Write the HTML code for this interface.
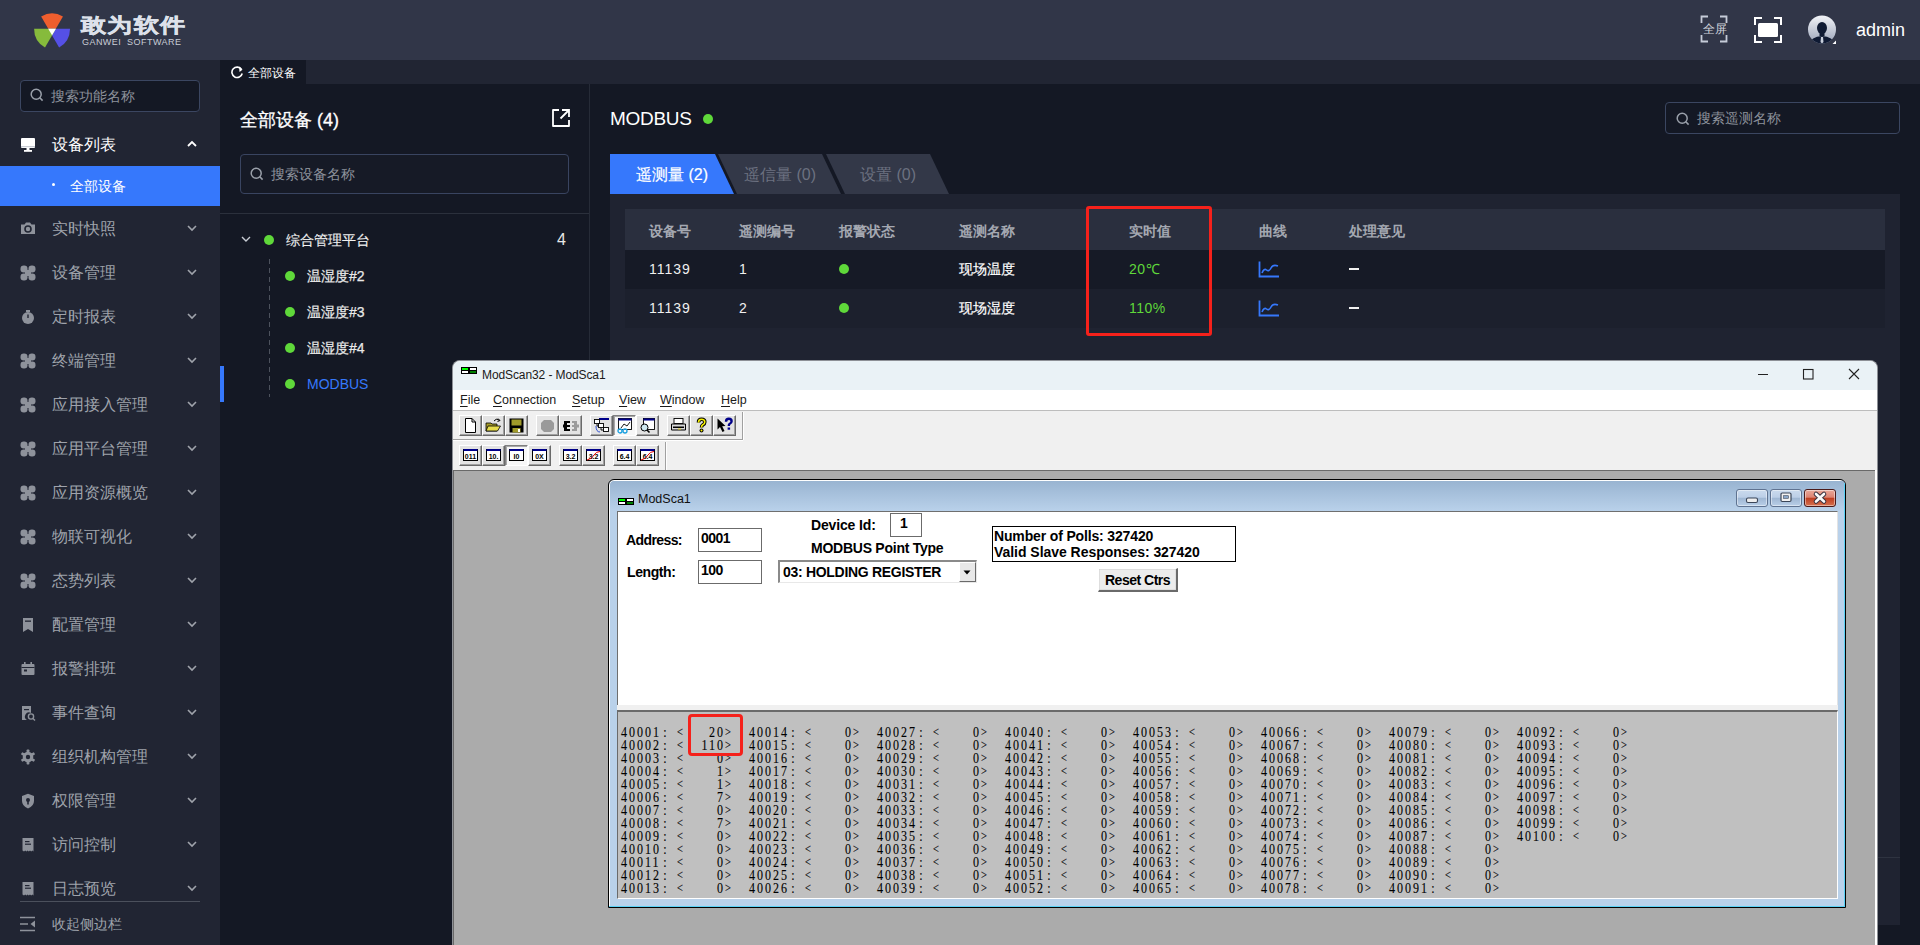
<!DOCTYPE html><html><head><meta charset="utf-8"><style>
html,body{margin:0;padding:0;width:1920px;height:945px;overflow:hidden;background:#141824;font-family:"Liberation Sans",sans-serif;}
.a{position:absolute;box-sizing:border-box;}
.t{position:absolute;white-space:pre;}
</style></head><body>
<div class="a" style="left:0px;top:0px;width:1920px;height:60px;background:#313648"></div>
<svg class="a" style="left:0;top:0" width="100" height="60" viewBox="0 0 100 60"><path d="M52.05,35.3 L41.15,16.42 A21.8,21.8 0 0 1 62.95,16.42 Z" fill="#ef5e2e"/><path d="M48.2,28.7 L70.00,28.70 A21.8,21.8 0 0 1 59.10,47.58 Z" fill="#5550e6"/><path d="M55.9,28.7 L45.00,47.58 A21.8,21.8 0 0 1 34.10,28.70 Z" fill="#86bb3c"/><path d="M48.2,28.7 L55.9,28.7 L52.05,35.3 Z" fill="#fff"/></svg>
<div class="t" style="left:81px;top:14px;font-size:25px;line-height:26px;color:#dde1ea;font-weight:bold;letter-spacing:1.4px;transform:scaleY(0.8);transform-origin:0 0;-webkit-text-stroke:0.6px #dde1ea">敢为软件</div>
<div class="t" style="left:82px;top:36px;font-size:9px;line-height:12px;color:#c9cdd6;font-weight:normal;letter-spacing:0.45px">GANWEI  SOFTWARE</div>
<svg class="a" style="left:1700px;top:15px;" width="28" height="28" viewBox="0 0 28 28"><path d="M1.5,8 V1.5 H8 M20,1.5 H26.5 V8 M26.5,20 V26.5 H20 M8,26.5 H1.5 V20" stroke="#c5cbd8" stroke-width="1.8" fill="none"/></svg>
<div class="t" style="left:1703px;top:19px;font-size:11.5px;line-height:20px;color:#d0d4dc;font-weight:normal;">全屏</div>
<svg class="a" style="left:1753px;top:16px;" width="30" height="28" viewBox="0 0 30 28"><path d="M2,9 V2 H9 M21,2 H28 V9 M28,19 V26 H21 M9,26 H2 V19" stroke="#fff" stroke-width="2" fill="none"/><rect x="5" y="7" width="20" height="14" rx="1.5" fill="#fff"/></svg>
<svg class="a" style="left:1807px;top:15px;" width="30" height="30" viewBox="0 0 30 30"><defs><linearGradient id="av" x1="0" y1="0" x2="0" y2="1"><stop offset="0" stop-color="#f2f4f8"/><stop offset="1" stop-color="#9aa3b8"/></linearGradient><clipPath id="avc"><circle cx="15" cy="14.5" r="14"/></clipPath></defs><circle cx="15" cy="14.5" r="14" fill="url(#av)"/><g clip-path="url(#avc)"><ellipse cx="15" cy="13" rx="5" ry="6" fill="#0f1a33"/><rect x="12.5" y="16" width="5" height="5" fill="#0f1a33"/><path d="M1,32 Q2,22 15,21 Q28,22 29,32 Z" fill="#0f1a33"/><path d="M14,22 L16,22 L16.5,27 L15,28.5 L13.5,27 Z" fill="#c8cfdc"/></g><path d="M25.5,29 L29,25.5 L29,29 Z" fill="#fff"/></svg>
<div class="t" style="left:1856px;top:19px;font-size:18px;line-height:22px;color:#ffffff;font-weight:normal;">admin</div>
<div class="a" style="left:220px;top:60px;width:1700px;height:24px;background:#212533"></div>
<div class="a" style="left:220px;top:60px;width:86px;height:24px;background:#141824"></div>
<svg class="a" style="left:230px;top:65px;" width="14" height="14" viewBox="0 0 14 14"><path d="M11.5,4.5 A5.2,5.2 0 1 0 12.2,8.5" stroke="#fff" stroke-width="1.6" fill="none"/><path d="M9,1.5 L12.5,4.8 L9.5,7 Z" fill="#fff"/></svg>
<div class="t" style="left:248px;top:63px;font-size:12px;line-height:20px;color:#fff;font-weight:normal;">全部设备</div>
<div class="a" style="left:0px;top:60px;width:220px;height:885px;background:#212533"></div>
<div class="a" style="left:20px;top:80px;width:180px;height:32px;background:#141824;border:1px solid #3b4661;border-radius:4px"></div>
<svg class="a" style="left:30px;top:88px;" width="14" height="14" viewBox="0 0 14 14"><circle cx="6.2" cy="6.2" r="5" stroke="#9aa0aa" stroke-width="1.5" fill="none"/><path d="M9.8,9.8 L12.6,12.6" stroke="#9aa0aa" stroke-width="1.6"/></svg>
<div class="t" style="left:51px;top:86px;font-size:14px;line-height:20px;color:#8c919b;font-weight:normal;">搜索功能名称</div>
<svg class="a" style="left:20px;top:137px;" width="16" height="16" viewBox="0 0 16 16"><rect x="1" y="1" width="14" height="10" rx="1" fill="#fff"/><rect x="1" y="9" width="14" height="1.2" fill="#c8ccd4"/><rect x="6.5" y="11" width="3" height="2.5" fill="#fff"/><rect x="4" y="13" width="8" height="1.8" fill="#fff"/></svg>
<div class="t" style="left:52px;top:135px;font-size:16px;line-height:20px;color:#ffffff;font-weight:normal;">设备列表</div>
<svg class="a" style="left:186px;top:140px;" width="12" height="8" viewBox="0 0 12 8"><path d="M2,6 L6,2 L10,6" stroke="#fff" stroke-width="1.8" fill="none"/></svg>
<div class="a" style="left:0px;top:166px;width:220px;height:40px;background:#3678fc"></div>
<div class="a" style="left:52px;top:183px;width:3px;height:3px;background:#fff;border-radius:2px"></div>
<div class="t" style="left:70px;top:176px;font-size:14px;line-height:20px;color:#fff;font-weight:normal;">全部设备</div>
<svg class="a" style="left:20px;top:221px;" width="16" height="14" viewBox="0 0 16 14"><path d="M1,3.5 H4.5 L6,1.5 H10 L11.5,3.5 H15 V13 H1 Z" fill="#8e929b"/><circle cx="8" cy="8" r="3" fill="none" stroke="#212533" stroke-width="1.6"/></svg>
<div class="t" style="left:52px;top:219px;font-size:16px;line-height:20px;color:#9fa3ab;font-weight:normal;">实时快照</div>
<svg class="a" style="left:186px;top:224px;" width="12" height="8" viewBox="0 0 12 8"><path d="M2,2 L6,6 L10,2" stroke="#9fa3ab" stroke-width="1.6" fill="none"/></svg>
<svg class="a" style="left:20px;top:265px;" width="16" height="16" viewBox="0 0 16 16"><g fill="#8e929b"><rect x="0.5" y="0.5" width="7" height="7" rx="3.3"/><rect x="8.5" y="0.5" width="7" height="7" rx="3.3"/><rect x="0.5" y="8.5" width="7" height="7" rx="3.3"/><rect x="8.5" y="8.5" width="7" height="7" rx="3.3"/></g><rect x="5" y="5" width="6" height="6" fill="#8e929b"/></svg>
<div class="t" style="left:52px;top:263px;font-size:16px;line-height:20px;color:#9fa3ab;font-weight:normal;">设备管理</div>
<svg class="a" style="left:186px;top:268px;" width="12" height="8" viewBox="0 0 12 8"><path d="M2,2 L6,6 L10,2" stroke="#9fa3ab" stroke-width="1.6" fill="none"/></svg>
<svg class="a" style="left:20px;top:309px;" width="16" height="16" viewBox="0 0 16 16"><circle cx="8" cy="9" r="6" fill="#8e929b"/><rect x="6" y="1" width="4" height="2" fill="#8e929b"/><path d="M8,9 V5.5" stroke="#212533" stroke-width="1.4"/></svg>
<div class="t" style="left:52px;top:307px;font-size:16px;line-height:20px;color:#9fa3ab;font-weight:normal;">定时报表</div>
<svg class="a" style="left:186px;top:312px;" width="12" height="8" viewBox="0 0 12 8"><path d="M2,2 L6,6 L10,2" stroke="#9fa3ab" stroke-width="1.6" fill="none"/></svg>
<svg class="a" style="left:20px;top:353px;" width="16" height="16" viewBox="0 0 16 16"><g fill="#8e929b"><rect x="0.5" y="0.5" width="7" height="7" rx="3.3"/><rect x="8.5" y="0.5" width="7" height="7" rx="3.3"/><rect x="0.5" y="8.5" width="7" height="7" rx="3.3"/><rect x="8.5" y="8.5" width="7" height="7" rx="3.3"/></g><rect x="5" y="5" width="6" height="6" fill="#8e929b"/></svg>
<div class="t" style="left:52px;top:351px;font-size:16px;line-height:20px;color:#9fa3ab;font-weight:normal;">终端管理</div>
<svg class="a" style="left:186px;top:356px;" width="12" height="8" viewBox="0 0 12 8"><path d="M2,2 L6,6 L10,2" stroke="#9fa3ab" stroke-width="1.6" fill="none"/></svg>
<svg class="a" style="left:20px;top:397px;" width="16" height="16" viewBox="0 0 16 16"><g fill="#8e929b"><rect x="0.5" y="0.5" width="7" height="7" rx="3.3"/><rect x="8.5" y="0.5" width="7" height="7" rx="3.3"/><rect x="0.5" y="8.5" width="7" height="7" rx="3.3"/><rect x="8.5" y="8.5" width="7" height="7" rx="3.3"/></g><rect x="5" y="5" width="6" height="6" fill="#8e929b"/></svg>
<div class="t" style="left:52px;top:395px;font-size:16px;line-height:20px;color:#9fa3ab;font-weight:normal;">应用接入管理</div>
<svg class="a" style="left:186px;top:400px;" width="12" height="8" viewBox="0 0 12 8"><path d="M2,2 L6,6 L10,2" stroke="#9fa3ab" stroke-width="1.6" fill="none"/></svg>
<svg class="a" style="left:20px;top:441px;" width="16" height="16" viewBox="0 0 16 16"><g fill="#8e929b"><rect x="0.5" y="0.5" width="7" height="7" rx="3.3"/><rect x="8.5" y="0.5" width="7" height="7" rx="3.3"/><rect x="0.5" y="8.5" width="7" height="7" rx="3.3"/><rect x="8.5" y="8.5" width="7" height="7" rx="3.3"/></g><rect x="5" y="5" width="6" height="6" fill="#8e929b"/></svg>
<div class="t" style="left:52px;top:439px;font-size:16px;line-height:20px;color:#9fa3ab;font-weight:normal;">应用平台管理</div>
<svg class="a" style="left:186px;top:444px;" width="12" height="8" viewBox="0 0 12 8"><path d="M2,2 L6,6 L10,2" stroke="#9fa3ab" stroke-width="1.6" fill="none"/></svg>
<svg class="a" style="left:20px;top:485px;" width="16" height="16" viewBox="0 0 16 16"><g fill="#8e929b"><rect x="0.5" y="0.5" width="7" height="7" rx="3.3"/><rect x="8.5" y="0.5" width="7" height="7" rx="3.3"/><rect x="0.5" y="8.5" width="7" height="7" rx="3.3"/><rect x="8.5" y="8.5" width="7" height="7" rx="3.3"/></g><rect x="5" y="5" width="6" height="6" fill="#8e929b"/></svg>
<div class="t" style="left:52px;top:483px;font-size:16px;line-height:20px;color:#9fa3ab;font-weight:normal;">应用资源概览</div>
<svg class="a" style="left:186px;top:488px;" width="12" height="8" viewBox="0 0 12 8"><path d="M2,2 L6,6 L10,2" stroke="#9fa3ab" stroke-width="1.6" fill="none"/></svg>
<svg class="a" style="left:20px;top:529px;" width="16" height="16" viewBox="0 0 16 16"><g fill="#8e929b"><rect x="0.5" y="0.5" width="7" height="7" rx="3.3"/><rect x="8.5" y="0.5" width="7" height="7" rx="3.3"/><rect x="0.5" y="8.5" width="7" height="7" rx="3.3"/><rect x="8.5" y="8.5" width="7" height="7" rx="3.3"/></g><rect x="5" y="5" width="6" height="6" fill="#8e929b"/></svg>
<div class="t" style="left:52px;top:527px;font-size:16px;line-height:20px;color:#9fa3ab;font-weight:normal;">物联可视化</div>
<svg class="a" style="left:186px;top:532px;" width="12" height="8" viewBox="0 0 12 8"><path d="M2,2 L6,6 L10,2" stroke="#9fa3ab" stroke-width="1.6" fill="none"/></svg>
<svg class="a" style="left:20px;top:573px;" width="16" height="16" viewBox="0 0 16 16"><g fill="#8e929b"><rect x="0.5" y="0.5" width="7" height="7" rx="3.3"/><rect x="8.5" y="0.5" width="7" height="7" rx="3.3"/><rect x="0.5" y="8.5" width="7" height="7" rx="3.3"/><rect x="8.5" y="8.5" width="7" height="7" rx="3.3"/></g><rect x="5" y="5" width="6" height="6" fill="#8e929b"/></svg>
<div class="t" style="left:52px;top:571px;font-size:16px;line-height:20px;color:#9fa3ab;font-weight:normal;">态势列表</div>
<svg class="a" style="left:186px;top:576px;" width="12" height="8" viewBox="0 0 12 8"><path d="M2,2 L6,6 L10,2" stroke="#9fa3ab" stroke-width="1.6" fill="none"/></svg>
<svg class="a" style="left:20px;top:617px;" width="16" height="16" viewBox="0 0 16 16"><path d="M3,1 H13 V15 L8,12 L3,15 Z" fill="#8e929b"/><rect x="5" y="3.5" width="6" height="1.3" fill="#212533"/></svg>
<div class="t" style="left:52px;top:615px;font-size:16px;line-height:20px;color:#9fa3ab;font-weight:normal;">配置管理</div>
<svg class="a" style="left:186px;top:620px;" width="12" height="8" viewBox="0 0 12 8"><path d="M2,2 L6,6 L10,2" stroke="#9fa3ab" stroke-width="1.6" fill="none"/></svg>
<svg class="a" style="left:20px;top:661px;" width="16" height="16" viewBox="0 0 16 16"><rect x="1.5" y="3" width="13" height="11" rx="1" fill="#8e929b"/><rect x="4" y="1" width="1.6" height="3.5" fill="#8e929b"/><rect x="10.4" y="1" width="1.6" height="3.5" fill="#8e929b"/><rect x="1.5" y="6" width="13" height="1" fill="#212533"/><rect x="4" y="8.5" width="3" height="2" fill="#212533"/></svg>
<div class="t" style="left:52px;top:659px;font-size:16px;line-height:20px;color:#9fa3ab;font-weight:normal;">报警排班</div>
<svg class="a" style="left:186px;top:664px;" width="12" height="8" viewBox="0 0 12 8"><path d="M2,2 L6,6 L10,2" stroke="#9fa3ab" stroke-width="1.6" fill="none"/></svg>
<svg class="a" style="left:20px;top:705px;" width="16" height="16" viewBox="0 0 16 16"><path d="M2,1 H11 V8 A4,4 0 0 0 7,15 H2 Z" fill="#8e929b"/><circle cx="11" cy="11.5" r="2.6" fill="none" stroke="#8e929b" stroke-width="1.4"/><path d="M13,13.5 L15,15.5" stroke="#8e929b" stroke-width="1.4"/><rect x="4" y="4" width="5" height="1.2" fill="#212533"/></svg>
<div class="t" style="left:52px;top:703px;font-size:16px;line-height:20px;color:#9fa3ab;font-weight:normal;">事件查询</div>
<svg class="a" style="left:186px;top:708px;" width="12" height="8" viewBox="0 0 12 8"><path d="M2,2 L6,6 L10,2" stroke="#9fa3ab" stroke-width="1.6" fill="none"/></svg>
<svg class="a" style="left:20px;top:749px;" width="16" height="16" viewBox="0 0 16 16"><rect x="6.6" y="0.5" width="2.8" height="15" rx="0.8" fill="#8e929b" transform="rotate(0 8 8)"/><rect x="6.6" y="0.5" width="2.8" height="15" rx="0.8" fill="#8e929b" transform="rotate(60 8 8)"/><rect x="6.6" y="0.5" width="2.8" height="15" rx="0.8" fill="#8e929b" transform="rotate(120 8 8)"/><circle cx="8" cy="8" r="5.3" fill="#8e929b"/><circle cx="8" cy="8" r="2.2" fill="#212533"/></svg>
<div class="t" style="left:52px;top:747px;font-size:16px;line-height:20px;color:#9fa3ab;font-weight:normal;">组织机构管理</div>
<svg class="a" style="left:186px;top:752px;" width="12" height="8" viewBox="0 0 12 8"><path d="M2,2 L6,6 L10,2" stroke="#9fa3ab" stroke-width="1.6" fill="none"/></svg>
<svg class="a" style="left:20px;top:793px;" width="16" height="16" viewBox="0 0 16 16"><path d="M8,0.8 L14,3 V8 Q14,13 8,15.5 Q2,13 2,8 V3 Z" fill="#8e929b"/><circle cx="8" cy="7" r="2" fill="#212533"/><rect x="7.2" y="8" width="1.6" height="3.5" fill="#212533"/></svg>
<div class="t" style="left:52px;top:791px;font-size:16px;line-height:20px;color:#9fa3ab;font-weight:normal;">权限管理</div>
<svg class="a" style="left:186px;top:796px;" width="12" height="8" viewBox="0 0 12 8"><path d="M2,2 L6,6 L10,2" stroke="#9fa3ab" stroke-width="1.6" fill="none"/></svg>
<svg class="a" style="left:20px;top:837px;" width="16" height="16" viewBox="0 0 16 16"><path d="M2.5,1 H13.5 V14.5 L12.4,13.6 L11.2,14.5 L10,13.6 L8.8,14.5 L7.6,13.6 L6.4,14.5 L5.2,13.6 L4,14.5 L2.5,13.6 Z" fill="#8e929b"/><rect x="5" y="4" width="4.5" height="1.2" fill="#212533"/><rect x="5" y="6.6" width="6" height="1.2" fill="#212533"/></svg>
<div class="t" style="left:52px;top:835px;font-size:16px;line-height:20px;color:#9fa3ab;font-weight:normal;">访问控制</div>
<svg class="a" style="left:186px;top:840px;" width="12" height="8" viewBox="0 0 12 8"><path d="M2,2 L6,6 L10,2" stroke="#9fa3ab" stroke-width="1.6" fill="none"/></svg>
<svg class="a" style="left:20px;top:881px;" width="16" height="16" viewBox="0 0 16 16"><path d="M2.5,1 H13.5 V14.5 L12.4,13.6 L11.2,14.5 L10,13.6 L8.8,14.5 L7.6,13.6 L6.4,14.5 L5.2,13.6 L4,14.5 L2.5,13.6 Z" fill="#8e929b"/><rect x="5" y="4" width="4.5" height="1.2" fill="#212533"/><rect x="5" y="6.6" width="6" height="1.2" fill="#212533"/></svg>
<div class="t" style="left:52px;top:879px;font-size:16px;line-height:20px;color:#9fa3ab;font-weight:normal;">日志预览</div>
<svg class="a" style="left:186px;top:884px;" width="12" height="8" viewBox="0 0 12 8"><path d="M2,2 L6,6 L10,2" stroke="#9fa3ab" stroke-width="1.6" fill="none"/></svg>
<div class="a" style="left:20px;top:901px;width:180px;height:1px;background:#4b505c"></div>
<svg class="a" style="left:19px;top:916px;" width="18" height="16" viewBox="0 0 18 16"><path d="M1,1.5 H16 M1,8 H9 M1,14.5 H16" stroke="#8e929b" stroke-width="1.6"/><path d="M16,4.5 V11.5 L11.5,8 Z" fill="#8e929b"/></svg>
<div class="t" style="left:52px;top:914px;font-size:14px;line-height:20px;color:#9fa3ab;font-weight:normal;">收起侧边栏</div>
<div class="a" style="left:220px;top:84px;width:369px;height:861px;background:#141824"></div>
<div class="a" style="left:589px;top:84px;width:1px;height:861px;background:#262b37"></div>
<div class="t" style="left:240px;top:110px;font-size:18px;line-height:20px;color:#fff;font-weight:normal;-webkit-text-stroke:0.3px #fff">全部设备 (4)</div>
<svg class="a" style="left:551px;top:108px;" width="20" height="20" viewBox="0 0 20 20"><path d="M8,2 H2 V18 H18 V12" stroke="#fff" stroke-width="1.8" fill="none" stroke-linejoin="round"/><path d="M11,2 H18 V9 M18,2 L9.5,10.5" stroke="#fff" stroke-width="1.8" fill="none"/></svg>
<div class="a" style="left:240px;top:154px;width:329px;height:40px;background:#161a26;border:1px solid #394460;border-radius:4px"></div>
<svg class="a" style="left:250px;top:167px;" width="14" height="14" viewBox="0 0 14 14"><circle cx="6.2" cy="6.2" r="5" stroke="#9aa0aa" stroke-width="1.5" fill="none"/><path d="M9.8,9.8 L12.6,12.6" stroke="#9aa0aa" stroke-width="1.6"/></svg>
<div class="t" style="left:271px;top:164px;font-size:14px;line-height:20px;color:#8c919b;font-weight:normal;">搜索设备名称</div>
<div class="a" style="left:220px;top:213px;width:369px;height:1px;background:#2b303c"></div>
<svg class="a" style="left:240px;top:235px;" width="12" height="8" viewBox="0 0 12 8"><path d="M2,2 L6,6 L10,2" stroke="#c8ccd4" stroke-width="1.4" fill="none"/></svg>
<div class="a" style="left:264px;top:235px;width:10px;height:10px;background:#5fd83a;border-radius:50%"></div>
<div class="t" style="left:286px;top:230px;font-size:14px;line-height:20px;color:#f0f0f0;font-weight:normal;-webkit-text-stroke:0.15px #f0f0f0">综合管理平台</div>
<div class="t" style="left:557px;top:230px;font-size:16px;line-height:20px;color:#e8e8e8;font-weight:normal;">4</div>
<svg class="a" style="left:268px;top:259px;" width="3" height="138" viewBox="0 0 3 138"><line x1="1.5" y1="0" x2="1.5" y2="138" stroke="#4d525d" stroke-width="1" stroke-dasharray="5,4"/></svg>
<div class="a" style="left:285px;top:271px;width:10px;height:10px;background:#5fd83a;border-radius:50%"></div>
<div class="t" style="left:307px;top:266px;font-size:14px;line-height:20px;color:#e8e8e8;font-weight:normal;-webkit-text-stroke:0.25px #e8e8e8">温湿度#2</div>
<div class="a" style="left:285px;top:307px;width:10px;height:10px;background:#5fd83a;border-radius:50%"></div>
<div class="t" style="left:307px;top:302px;font-size:14px;line-height:20px;color:#e8e8e8;font-weight:normal;-webkit-text-stroke:0.25px #e8e8e8">温湿度#3</div>
<div class="a" style="left:285px;top:343px;width:10px;height:10px;background:#5fd83a;border-radius:50%"></div>
<div class="t" style="left:307px;top:338px;font-size:14px;line-height:20px;color:#e8e8e8;font-weight:normal;-webkit-text-stroke:0.25px #e8e8e8">温湿度#4</div>
<div class="a" style="left:285px;top:379px;width:10px;height:10px;background:#5fd83a;border-radius:50%"></div>
<div class="t" style="left:307px;top:374px;font-size:14px;line-height:20px;color:#3678fc;font-weight:normal;">MODBUS</div>
<div class="a" style="left:220px;top:366px;width:4px;height:36px;background:#3678fc"></div>
<div class="t" style="left:610px;top:109px;font-size:19px;line-height:20px;color:#fff;font-weight:normal;letter-spacing:-0.3px">MODBUS</div>
<div class="a" style="left:703px;top:114px;width:10px;height:10px;background:#5fd83a;border-radius:50%"></div>
<div class="a" style="left:1665px;top:102px;width:235px;height:32px;background:#141824;border:1px solid #3b4661;border-radius:4px"></div>
<svg class="a" style="left:1676px;top:112px;" width="14" height="14" viewBox="0 0 14 14"><circle cx="6.2" cy="6.2" r="5" stroke="#9aa0aa" stroke-width="1.5" fill="none"/><path d="M9.8,9.8 L12.6,12.6" stroke="#9aa0aa" stroke-width="1.6"/></svg>
<div class="t" style="left:1697px;top:108px;font-size:14px;line-height:20px;color:#8c919b;font-weight:normal;">搜索遥测名称</div>
<svg class="a" style="left:600px;top:150px;" width="360" height="46" viewBox="0 0 360 46"><path d="M10,4 H115 L134,44 H10 Z" fill="#3678fc"/><path d="M118,4 H222 L241,44 H137 Z" fill="#333848"/><path d="M226,4 H330 L349,44 H245 Z" fill="#333848"/></svg>
<div class="t" style="left:636px;top:165px;font-size:16px;line-height:20px;color:#fff;font-weight:normal;-webkit-text-stroke:0.2px #fff">遥测量 (2)</div>
<div class="t" style="left:744px;top:165px;font-size:16px;line-height:20px;color:#6c7180;font-weight:normal;">遥信量 (0)</div>
<div class="t" style="left:860px;top:165px;font-size:16px;line-height:20px;color:#6c7180;font-weight:normal;">设置 (0)</div>
<div class="a" style="left:610px;top:194px;width:1290px;height:731px;background:#1f2331"></div>
<div class="a" style="left:610px;top:857px;width:1290px;height:1px;background:#2e3340"></div>
<div class="a" style="left:625px;top:209px;width:1260px;height:41px;background:#2a2f3e"></div>
<div class="a" style="left:625px;top:250px;width:1260px;height:39px;background:#161a26"></div>
<div class="a" style="left:625px;top:289px;width:1260px;height:39px;background:#1c202d"></div>
<div class="t" style="left:649px;top:221px;font-size:14px;line-height:20px;color:#a4a8b1;font-weight:bold;">设备号</div>
<div class="t" style="left:739px;top:221px;font-size:14px;line-height:20px;color:#a4a8b1;font-weight:bold;">遥测编号</div>
<div class="t" style="left:839px;top:221px;font-size:14px;line-height:20px;color:#a4a8b1;font-weight:bold;">报警状态</div>
<div class="t" style="left:959px;top:221px;font-size:14px;line-height:20px;color:#a4a8b1;font-weight:bold;">遥测名称</div>
<div class="t" style="left:1129px;top:221px;font-size:14px;line-height:20px;color:#a4a8b1;font-weight:bold;">实时值</div>
<div class="t" style="left:1259px;top:221px;font-size:14px;line-height:20px;color:#a4a8b1;font-weight:bold;">曲线</div>
<div class="t" style="left:1349px;top:221px;font-size:14px;line-height:20px;color:#a4a8b1;font-weight:bold;">处理意见</div>
<div class="t" style="left:649px;top:259px;font-size:14px;line-height:20px;color:#f0f0f0;font-weight:normal;letter-spacing:1px">11139</div>
<div class="t" style="left:739px;top:259px;font-size:14px;line-height:20px;color:#f0f0f0;font-weight:normal;letter-spacing:1px">1</div>
<div class="a" style="left:839px;top:264px;width:10px;height:10px;background:#5fd83a;border-radius:50%"></div>
<div class="t" style="left:959px;top:259px;font-size:14px;line-height:20px;color:#ffffff;font-weight:normal;-webkit-text-stroke:0.2px #fff">现场温度</div>
<div class="t" style="left:1129px;top:259px;font-size:14px;line-height:20px;color:#5fd83a;font-weight:normal;letter-spacing:0.5px">20℃</div>
<svg class="a" style="left:1258px;top:261px;" width="22" height="17" viewBox="0 0 22 17"><path d="M1.5,0.5 V15.5 H21" stroke="#3678fc" stroke-width="1.8" fill="none"/><path d="M4,12 Q6,7 8.5,9 Q11,11 13,7 Q15,3 20,5" stroke="#3678fc" stroke-width="1.6" fill="none"/></svg>
<div class="a" style="left:1349px;top:268px;width:10px;height:1.5px;background:#f0f0f0"></div>
<div class="t" style="left:649px;top:298px;font-size:14px;line-height:20px;color:#f0f0f0;font-weight:normal;letter-spacing:1px">11139</div>
<div class="t" style="left:739px;top:298px;font-size:14px;line-height:20px;color:#f0f0f0;font-weight:normal;letter-spacing:1px">2</div>
<div class="a" style="left:839px;top:303px;width:10px;height:10px;background:#5fd83a;border-radius:50%"></div>
<div class="t" style="left:959px;top:298px;font-size:14px;line-height:20px;color:#ffffff;font-weight:normal;-webkit-text-stroke:0.2px #fff">现场湿度</div>
<div class="t" style="left:1129px;top:298px;font-size:14px;line-height:20px;color:#5fd83a;font-weight:normal;letter-spacing:0.5px">110%</div>
<svg class="a" style="left:1258px;top:300px;" width="22" height="17" viewBox="0 0 22 17"><path d="M1.5,0.5 V15.5 H21" stroke="#3678fc" stroke-width="1.8" fill="none"/><path d="M4,12 Q6,7 8.5,9 Q11,11 13,7 Q15,3 20,5" stroke="#3678fc" stroke-width="1.6" fill="none"/></svg>
<div class="a" style="left:1349px;top:307px;width:10px;height:1.5px;background:#f0f0f0"></div>
<div class="a" style="left:1086px;top:206px;width:126px;height:130px;border:3px solid #f5211b;border-radius:3px"></div>
<div class="a" style="left:452px;top:360px;width:1426px;height:585px;border:1px solid #8d9096;border-bottom:none;border-radius:8px 8px 0 0;background:#f0f0f0"></div>
<div class="a" style="left:453px;top:361px;width:1424px;height:29px;background:#eaf2f6;border-radius:7px 7px 0 0"></div>
<svg class="a" style="left:461px;top:367px;shape-rendering:crispEdges" width="16" height="7" viewBox="0 0 16 7"><rect x="0" y="0" width="16" height="7" fill="#000"/><rect x="1" y="1" width="6" height="2" fill="#00ff00"/><rect x="9" y="1" width="6" height="2" fill="#fff"/><rect x="1" y="4" width="6" height="2" fill="#fff"/><rect x="9" y="4" width="6" height="2" fill="#008000"/></svg>
<div class="t" style="left:482px;top:365px;font-size:12px;line-height:20px;color:#1a1a1a;font-weight:normal;letter-spacing:-0.1px">ModScan32 - ModSca1</div>
<svg class="a" style="left:1755px;top:364px;" width="110" height="22" viewBox="0 0 110 22"><path d="M3,10.5 H13" stroke="#222" stroke-width="1"/><rect x="48.5" y="5.5" width="9.5" height="9.5" fill="none" stroke="#222" stroke-width="1.1"/><path d="M94,5 L104,15 M104,5 L94,15" stroke="#222" stroke-width="1.1"/></svg>
<div class="a" style="left:453px;top:390px;width:1424px;height:20px;background:#ffffff"></div>
<div class="a" style="left:453px;top:410px;width:1424px;height:1px;background:#bdbdbd"></div>
<div class="t" style="left:460px;top:390px;font-size:12.5px;line-height:20px;color:#1a1a1a"><span style="text-decoration:underline;text-underline-offset:2px">F</span>ile</div>
<div class="t" style="left:493px;top:390px;font-size:12.5px;line-height:20px;color:#1a1a1a"><span style="text-decoration:underline;text-underline-offset:2px">C</span>onnection</div>
<div class="t" style="left:572px;top:390px;font-size:12.5px;line-height:20px;color:#1a1a1a"><span style="text-decoration:underline;text-underline-offset:2px">S</span>etup</div>
<div class="t" style="left:619px;top:390px;font-size:12.5px;line-height:20px;color:#1a1a1a"><span style="text-decoration:underline;text-underline-offset:2px">V</span>iew</div>
<div class="t" style="left:660px;top:390px;font-size:12.5px;line-height:20px;color:#1a1a1a"><span style="text-decoration:underline;text-underline-offset:2px">W</span>indow</div>
<div class="t" style="left:721px;top:390px;font-size:12.5px;line-height:20px;color:#1a1a1a"><span style="text-decoration:underline;text-underline-offset:2px">H</span>elp</div>
<div class="a" style="left:453px;top:411px;width:1424px;height:59px;background:#f0f0f0"></div>
<div class="a" style="left:453px;top:439px;width:290px;height:1px;background:#a0a0a0"></div>
<div class="a" style="left:453px;top:440px;width:290px;height:1px;background:#fff"></div>
<div class="a" style="left:742px;top:412px;width:1px;height:28px;background:#a0a0a0"></div>
<div class="a" style="left:743px;top:412px;width:1px;height:28px;background:#fff"></div>
<div class="a" style="left:665px;top:442px;width:1px;height:28px;background:#a0a0a0"></div>
<div class="a" style="left:666px;top:442px;width:1px;height:28px;background:#fff"></div>
<div class="a" style="left:459px;top:415px;width:23px;height:21px;background:#e3e3e3;border-top:1px solid #fff;border-left:1px solid #fff;border-right:1px solid #6a6a6a;border-bottom:1px solid #6a6a6a;box-shadow:inset -1px -1px 0 #a0a0a0"></div>
<svg class="a" style="left:462px;top:417px;" width="17" height="17" viewBox="0 0 17 17"><path d="M3.5,1.5 H10 L13.5,5 V15.5 H3.5 Z" fill="#fff" stroke="#000"/><path d="M10,1.5 V5 H13.5" fill="none" stroke="#000"/></svg>
<div class="a" style="left:482px;top:415px;width:23px;height:21px;background:#e3e3e3;border-top:1px solid #fff;border-left:1px solid #fff;border-right:1px solid #6a6a6a;border-bottom:1px solid #6a6a6a;box-shadow:inset -1px -1px 0 #a0a0a0"></div>
<svg class="a" style="left:485px;top:417px;" width="17" height="17" viewBox="0 0 17 17"><path d="M1,6 H6 L7,7 H12 V14 H1 Z" fill="#a49a2a" stroke="#000" stroke-width="0.8"/><path d="M3,9 H15.5 L12.5,14 H1 Z" fill="#e6dc4a" stroke="#000" stroke-width="0.8"/><path d="M9,4 Q11,1 14,3" stroke="#000" fill="none"/><path d="M13,1.5 L15,3.5 L12.5,4.5" stroke="#000" fill="none"/></svg>
<div class="a" style="left:505px;top:415px;width:23px;height:21px;background:#e3e3e3;border-top:1px solid #fff;border-left:1px solid #fff;border-right:1px solid #6a6a6a;border-bottom:1px solid #6a6a6a;box-shadow:inset -1px -1px 0 #a0a0a0"></div>
<svg class="a" style="left:508px;top:417px;" width="17" height="17" viewBox="0 0 17 17"><rect x="1.5" y="1.5" width="14" height="14" fill="#000"/><rect x="3.5" y="2.5" width="10" height="6" fill="#a09a2a"/><rect x="4.5" y="11" width="8" height="4.5" fill="#a09a2a"/><rect x="10" y="12" width="2" height="3" fill="#fff"/></svg>
<div class="a" style="left:536px;top:415px;width:23px;height:21px;background:#e3e3e3;border-top:1px solid #fff;border-left:1px solid #fff;border-right:1px solid #6a6a6a;border-bottom:1px solid #6a6a6a;box-shadow:inset -1px -1px 0 #a0a0a0"></div>
<svg class="a" style="left:539px;top:417px;" width="17" height="17" viewBox="0 0 17 17"><path d="M5,3 H12 L15,6 V12 L12,15 H5 L2,12 V6 Z" fill="#9a9a9a"/></svg>
<div class="a" style="left:559px;top:415px;width:23px;height:21px;background:#e3e3e3;border-top:1px solid #fff;border-left:1px solid #fff;border-right:1px solid #6a6a6a;border-bottom:1px solid #6a6a6a;box-shadow:inset -1px -1px 0 #a0a0a0"></div>
<svg class="a" style="left:562px;top:417px;" width="17" height="17" viewBox="0 0 17 17"><path d="M2,4 H8 V6 H5 V8 H8 V10 H5 V12 H8 V14 H2 Z" fill="#000"/><path d="M1,7.5 H3 V10.5 H1 Z" fill="#000"/><path d="M10,4 H15 V14 H10 V12 H12 V10 H10 V8 H12 V6 H10 Z" fill="#9a9a9a"/><rect x="15" y="7.5" width="2" height="3" fill="#9a9a9a"/></svg>
<div class="a" style="left:590px;top:415px;width:23px;height:21px;background:#e3e3e3;border-top:1px solid #fff;border-left:1px solid #fff;border-right:1px solid #6a6a6a;border-bottom:1px solid #6a6a6a;box-shadow:inset -1px -1px 0 #a0a0a0"></div>
<svg class="a" style="left:593px;top:417px;" width="17" height="17" viewBox="0 0 17 17"><rect x="6" y="1" width="10" height="2" fill="#00008a"/><rect x="1.5" y="2.5" width="5" height="4" fill="#fff" stroke="#000" stroke-width="0.9"/><rect x="5.5" y="6.5" width="5" height="4" fill="#fff" stroke="#000" stroke-width="0.9"/><rect x="10.5" y="10.5" width="5" height="4" fill="#fff" stroke="#000" stroke-width="0.9"/><path d="M4,7 V9 H5.5 M8,11 V13 H10.5" stroke="#000" fill="none" stroke-width="0.9"/><path d="M3,9 Q3,15 7,15" stroke="#3050d0" fill="none" stroke-width="1"/></svg>
<div class="a" style="left:613px;top:415px;width:23px;height:21px;background:#f7f7f7;border-top:1px solid #808080;border-left:1px solid #808080;border-right:1px solid #fff;border-bottom:1px solid #fff;box-shadow:inset 1px 1px 0 #a8a8a8"></div>
<svg class="a" style="left:616px;top:417px;" width="17" height="17" viewBox="0 0 17 17"><rect x="2.5" y="1.5" width="13" height="11" fill="#fff" stroke="#000" stroke-width="0.9"/><rect x="2.5" y="1.5" width="13" height="2" fill="#00008a"/><path d="M5,11 L8,7 L11,9 L14,5" stroke="#000" fill="none" stroke-width="0.9"/><circle cx="4" cy="14" r="2" fill="none" stroke="#1aa0e0" stroke-width="1.3"/><circle cx="9" cy="14" r="2" fill="none" stroke="#1aa0e0" stroke-width="1.3"/></svg>
<div class="a" style="left:636px;top:415px;width:23px;height:21px;background:#e3e3e3;border-top:1px solid #fff;border-left:1px solid #fff;border-right:1px solid #6a6a6a;border-bottom:1px solid #6a6a6a;box-shadow:inset -1px -1px 0 #a0a0a0"></div>
<svg class="a" style="left:639px;top:417px;" width="17" height="17" viewBox="0 0 17 17"><rect x="4.5" y="1.5" width="11" height="11" fill="#fff" stroke="#000" stroke-width="0.9"/><rect x="4.5" y="1.5" width="11" height="2" fill="#00008a"/><circle cx="5.5" cy="10.5" r="3.5" fill="#cfe8f0" stroke="#000" stroke-width="1"/><path d="M8,13 L10.5,15.5" stroke="#000" stroke-width="1.6"/></svg>
<div class="a" style="left:667px;top:415px;width:23px;height:21px;background:#e3e3e3;border-top:1px solid #fff;border-left:1px solid #fff;border-right:1px solid #6a6a6a;border-bottom:1px solid #6a6a6a;box-shadow:inset -1px -1px 0 #a0a0a0"></div>
<svg class="a" style="left:670px;top:417px;" width="17" height="17" viewBox="0 0 17 17"><rect x="4" y="1.5" width="9" height="5" fill="#fff" stroke="#000" stroke-width="0.9"/><path d="M1.5,7 H15.5 V13 H1.5 Z" fill="#d8d8d8" stroke="#000" stroke-width="1"/><rect x="3" y="9.5" width="11" height="1.5" fill="#000"/><rect x="8" y="11.5" width="3" height="1" fill="#e0d020"/></svg>
<div class="a" style="left:690px;top:415px;width:23px;height:21px;background:#e3e3e3;border-top:1px solid #fff;border-left:1px solid #fff;border-right:1px solid #6a6a6a;border-bottom:1px solid #6a6a6a;box-shadow:inset -1px -1px 0 #a0a0a0"></div>
<svg class="a" style="left:693px;top:417px;" width="17" height="17" viewBox="0 0 17 17"><path d="M5.5,5.5 Q5.5,2.2 8.5,2.2 Q11.8,2.2 11.8,5 Q11.8,6.8 9.8,7.8 Q8.5,8.5 8.5,10.5" fill="none" stroke="#000" stroke-width="3.6"/><path d="M5.5,5.5 Q5.5,2.2 8.5,2.2 Q11.8,2.2 11.8,5 Q11.8,6.8 9.8,7.8 Q8.5,8.5 8.5,10.5" fill="none" stroke="#f5f000" stroke-width="1.6"/><circle cx="8.5" cy="13.6" r="2" fill="#000"/><circle cx="8.5" cy="13.6" r="1" fill="#f5f000"/></svg>
<div class="a" style="left:713px;top:415px;width:23px;height:21px;background:#e3e3e3;border-top:1px solid #fff;border-left:1px solid #fff;border-right:1px solid #6a6a6a;border-bottom:1px solid #6a6a6a;box-shadow:inset -1px -1px 0 #a0a0a0"></div>
<svg class="a" style="left:716px;top:417px;" width="17" height="17" viewBox="0 0 17 17"><path d="M1.5,1.5 L1.5,12.5 L4,10 L6.5,15 L8.5,14 L6.2,9.2 L9.5,9 Z" fill="#000"/><path d="M10,4.8 Q10,1.8 12.8,1.8 Q15.6,1.8 15.6,4.2 Q15.6,6 13.5,7 Q12.8,7.5 12.8,9" fill="none" stroke="#00008a" stroke-width="2.4"/><rect x="11.6" y="10.5" width="2.5" height="2.2" fill="#00008a"/></svg>
<div class="a" style="left:459px;top:445px;width:23px;height:21px;background:#e3e3e3;border-top:1px solid #fff;border-left:1px solid #fff;border-right:1px solid #6a6a6a;border-bottom:1px solid #6a6a6a;box-shadow:inset -1px -1px 0 #a0a0a0"></div>
<svg class="a" style="left:462px;top:447px;" width="17" height="17" viewBox="0 0 17 17"><rect x="1.5" y="2.5" width="14" height="11" fill="#fff" stroke="#000" stroke-width="1"/><rect x="1.5" y="2" width="14" height="2" fill="#00008a"/><text x="8.5" y="12" text-anchor="middle" font-family="Liberation Sans" font-size="7" font-weight="bold" fill="#000">011</text></svg>
<div class="a" style="left:482px;top:445px;width:23px;height:21px;background:#e3e3e3;border-top:1px solid #fff;border-left:1px solid #fff;border-right:1px solid #6a6a6a;border-bottom:1px solid #6a6a6a;box-shadow:inset -1px -1px 0 #a0a0a0"></div>
<svg class="a" style="left:485px;top:447px;" width="17" height="17" viewBox="0 0 17 17"><rect x="1.5" y="2.5" width="14" height="11" fill="#fff" stroke="#000" stroke-width="1"/><rect x="1.5" y="2" width="14" height="2" fill="#00008a"/><text x="8.5" y="12" text-anchor="middle" font-family="Liberation Sans" font-size="7" font-weight="bold" fill="#000">10.</text></svg>
<div class="a" style="left:505px;top:445px;width:23px;height:21px;background:#f7f7f7;border-top:1px solid #808080;border-left:1px solid #808080;border-right:1px solid #fff;border-bottom:1px solid #fff;box-shadow:inset 1px 1px 0 #a8a8a8"></div>
<svg class="a" style="left:508px;top:447px;" width="17" height="17" viewBox="0 0 17 17"><rect x="1.5" y="2.5" width="14" height="11" fill="#fff" stroke="#000" stroke-width="1"/><rect x="1.5" y="2" width="14" height="2" fill="#00008a"/><text x="8.5" y="12" text-anchor="middle" font-family="Liberation Sans" font-size="7" font-weight="bold" fill="#000">I0</text></svg>
<div class="a" style="left:528px;top:445px;width:23px;height:21px;background:#e3e3e3;border-top:1px solid #fff;border-left:1px solid #fff;border-right:1px solid #6a6a6a;border-bottom:1px solid #6a6a6a;box-shadow:inset -1px -1px 0 #a0a0a0"></div>
<svg class="a" style="left:531px;top:447px;" width="17" height="17" viewBox="0 0 17 17"><rect x="1.5" y="2.5" width="14" height="11" fill="#fff" stroke="#000" stroke-width="1"/><rect x="1.5" y="2" width="14" height="2" fill="#00008a"/><text x="8.5" y="12" text-anchor="middle" font-family="Liberation Sans" font-size="7" font-weight="bold" fill="#000">0X</text></svg>
<div class="a" style="left:559px;top:445px;width:23px;height:21px;background:#e3e3e3;border-top:1px solid #fff;border-left:1px solid #fff;border-right:1px solid #6a6a6a;border-bottom:1px solid #6a6a6a;box-shadow:inset -1px -1px 0 #a0a0a0"></div>
<svg class="a" style="left:562px;top:447px;" width="17" height="17" viewBox="0 0 17 17"><rect x="1.5" y="2.5" width="14" height="11" fill="#fff" stroke="#000" stroke-width="1"/><rect x="1.5" y="2" width="14" height="2" fill="#00008a"/><text x="8.5" y="12" text-anchor="middle" font-family="Liberation Sans" font-size="7" font-weight="bold" fill="#000">3.2</text></svg>
<div class="a" style="left:582px;top:445px;width:23px;height:21px;background:#e3e3e3;border-top:1px solid #fff;border-left:1px solid #fff;border-right:1px solid #6a6a6a;border-bottom:1px solid #6a6a6a;box-shadow:inset -1px -1px 0 #a0a0a0"></div>
<svg class="a" style="left:585px;top:447px;" width="17" height="17" viewBox="0 0 17 17"><rect x="1.5" y="2.5" width="14" height="11" fill="#fff" stroke="#000" stroke-width="1"/><rect x="1.5" y="2" width="14" height="2" fill="#00008a"/><text x="8.5" y="12" text-anchor="middle" font-family="Liberation Sans" font-size="7" font-weight="bold" fill="#000">3.2</text><path d="M2,13 Q7,12 9,8 Q11,4.5 15,4.5" stroke="#e00000" stroke-width="1" fill="none"/></svg>
<div class="a" style="left:613px;top:445px;width:23px;height:21px;background:#e3e3e3;border-top:1px solid #fff;border-left:1px solid #fff;border-right:1px solid #6a6a6a;border-bottom:1px solid #6a6a6a;box-shadow:inset -1px -1px 0 #a0a0a0"></div>
<svg class="a" style="left:616px;top:447px;" width="17" height="17" viewBox="0 0 17 17"><rect x="1.5" y="2.5" width="14" height="11" fill="#fff" stroke="#000" stroke-width="1"/><rect x="1.5" y="2" width="14" height="2" fill="#00008a"/><text x="8.5" y="12" text-anchor="middle" font-family="Liberation Sans" font-size="7" font-weight="bold" fill="#000">6.4</text></svg>
<div class="a" style="left:636px;top:445px;width:23px;height:21px;background:#e3e3e3;border-top:1px solid #fff;border-left:1px solid #fff;border-right:1px solid #6a6a6a;border-bottom:1px solid #6a6a6a;box-shadow:inset -1px -1px 0 #a0a0a0"></div>
<svg class="a" style="left:639px;top:447px;" width="17" height="17" viewBox="0 0 17 17"><rect x="1.5" y="2.5" width="14" height="11" fill="#fff" stroke="#000" stroke-width="1"/><rect x="1.5" y="2" width="14" height="2" fill="#00008a"/><text x="8.5" y="12" text-anchor="middle" font-family="Liberation Sans" font-size="7" font-weight="bold" fill="#000">6.4</text><path d="M2,13 Q7,12 9,8 Q11,4.5 15,4.5" stroke="#e00000" stroke-width="1" fill="none"/></svg>
<div class="a" style="left:453px;top:470px;width:1424px;height:475px;background:#ababab;border-top:1px solid #696969;border-left:1px solid #696969"></div>
<div class="a" style="left:1875px;top:470px;width:2px;height:475px;background:#ffffff"></div>
<div class="a" style="left:608px;top:479px;width:1238px;height:429px;background:#b9d1ea;border:1px solid #000;border-radius:6px 6px 0 0;box-shadow:inset 1px 1px 0 #fff"></div>
<div class="a" style="left:610px;top:481px;width:1235px;height:30px;background:linear-gradient(#99b4d1,#b9d1ea);border-radius:4px 4px 0 0"></div>
<div class="a" style="left:1844px;top:483px;width:1px;height:424px;background:#5ad1f5"></div>
<div class="a" style="left:609px;top:906px;width:1235px;height:1px;background:#5ad1f5"></div>
<svg class="a" style="left:618px;top:498px;shape-rendering:crispEdges" width="16" height="7" viewBox="0 0 16 7"><rect x="0" y="0" width="16" height="7" fill="#000"/><rect x="1" y="1" width="6" height="2" fill="#00ff00"/><rect x="9" y="1" width="6" height="2" fill="#fff"/><rect x="1" y="4" width="6" height="2" fill="#fff"/><rect x="9" y="4" width="6" height="2" fill="#008000"/></svg>
<div class="t" style="left:638px;top:489px;font-size:12.5px;line-height:20px;color:#101010;font-weight:normal;">ModSca1</div>
<div class="a" style="left:1736px;top:489px;width:32px;height:18px;border:1px solid #5f7391;border-radius:3px;background:linear-gradient(#cadaed 0%,#bccfe7 45%,#9fb7d3 52%,#b9cfe8 100%);box-shadow:inset 0 0 0 1px rgba(255,255,255,0.45)"></div>
<svg class="a" style="left:1736px;top:489px;" width="32" height="18" viewBox="0 0 32 18"><rect x="10.5" y="9" width="11" height="4.5" rx="1.5" fill="#eeeeee" stroke="#3b4658" stroke-width="1.1"/></svg>
<div class="a" style="left:1770px;top:489px;width:32px;height:18px;border:1px solid #5f7391;border-radius:3px;background:linear-gradient(#cadaed 0%,#bccfe7 45%,#9fb7d3 52%,#b9cfe8 100%);box-shadow:inset 0 0 0 1px rgba(255,255,255,0.45)"></div>
<svg class="a" style="left:1770px;top:489px;" width="32" height="18" viewBox="0 0 32 18"><rect x="11" y="4" width="10" height="8.5" rx="1.2" fill="#f2f2f2" stroke="#3b4658" stroke-width="1.2"/><rect x="13.6" y="6.7" width="4.8" height="2.6" fill="#8aa6c9" stroke="#3b4658" stroke-width="0.6"/></svg>
<div class="a" style="left:1804px;top:489px;width:32px;height:18px;border:1px solid #4a1a1a;border-radius:3px;background:linear-gradient(#eaa99a 0%,#dd8372 45%,#bf3f22 52%,#d6714f 100%);box-shadow:inset 0 0 0 1px rgba(255,255,255,0.45)"></div>
<svg class="a" style="left:1804px;top:489px;" width="32" height="18" viewBox="0 0 32 18"><path d="M12,5 L20,12.5 M20,5 L12,12.5" stroke="#3b3340" stroke-width="4.6" stroke-linecap="round"/><path d="M12,5 L20,12.5 M20,5 L12,12.5" stroke="#fafafa" stroke-width="2.6" stroke-linecap="round"/></svg>
<div class="a" style="left:617px;top:511px;width:1221px;height:194px;background:#fff;border-top:1px solid #6f6f6f;border-left:1px solid #6f6f6f;border-right:1px solid #e3e3e3"></div>
<div class="a" style="left:617px;top:705px;width:1221px;height:5px;background:#f0f0f0"></div>
<div class="a" style="left:617px;top:710px;width:1221px;height:189px;background:#c0c0c0;border-top:2px solid #6a6a6a;border-left:1px solid #6a6a6a;border-bottom:1px solid #fff;border-right:1px solid #fff"></div>
<div class="t" style="left:626px;top:530px;font-size:14px;line-height:20px;color:#000;font-family:'Liberation Sans',sans-serif;font-weight:bold;letter-spacing:-0.6px">Address:</div>
<div class="a" style="left:698px;top:528px;width:64px;height:24px;background:#fff;border:1px solid #6b6b6b"></div>
<div class="t" style="left:701px;top:528px;font-size:14px;line-height:20px;color:#000;font-family:'Liberation Sans',sans-serif;font-weight:bold;letter-spacing:-0.5px">0001</div>
<div class="t" style="left:627px;top:562px;font-size:14px;line-height:20px;color:#000;font-family:'Liberation Sans',sans-serif;font-weight:bold;letter-spacing:-0.4px">Length:</div>
<div class="a" style="left:698px;top:560px;width:64px;height:24px;background:#fff;border:1px solid #6b6b6b"></div>
<div class="t" style="left:701px;top:560px;font-size:14px;line-height:20px;color:#000;font-family:'Liberation Sans',sans-serif;font-weight:bold;letter-spacing:-0.5px">100</div>
<div class="t" style="left:811px;top:515px;font-size:14px;line-height:20px;color:#000;font-family:'Liberation Sans',sans-serif;font-weight:bold;letter-spacing:-0.15px">Device Id:</div>
<div class="a" style="left:890px;top:513px;width:32px;height:24px;background:#fff;border:1px solid #6b6b6b"></div>
<div class="t" style="left:900px;top:513px;font-size:14px;line-height:20px;color:#000;font-family:'Liberation Sans',sans-serif;font-weight:bold;">1</div>
<div class="t" style="left:811px;top:538px;font-size:14px;line-height:20px;color:#000;font-family:'Liberation Sans',sans-serif;font-weight:bold;letter-spacing:-0.25px">MODBUS Point Type</div>
<div class="a" style="left:778px;top:560px;width:199px;height:23px;background:#fff;border-top:2px solid #8a8a8a;border-left:2px solid #8a8a8a;border-bottom:1px solid #e8e8e8;border-right:1px solid #e8e8e8"></div>
<div class="t" style="left:783px;top:562px;font-size:14px;line-height:20px;color:#000;font-family:'Liberation Sans',sans-serif;font-weight:bold;letter-spacing:-0.3px">03: HOLDING REGISTER</div>
<div class="a" style="left:959px;top:562px;width:17px;height:20px;background:#e8e8e8;border-top:1px solid #fff;border-left:1px solid #fff;border-right:1px solid #6a6a6a;border-bottom:1px solid #6a6a6a"></div>
<svg class="a" style="left:959px;top:562px;" width="17" height="20" viewBox="0 0 17 20"><path d="M4.5,8.5 H11.5 L8,12.5 Z" fill="#000"/></svg>
<div class="a" style="left:992px;top:526px;width:244px;height:36px;background:#fff;border:1px solid #000"></div>
<div class="t" style="left:994px;top:526px;font-size:14px;line-height:20px;color:#000;font-family:'Liberation Sans',sans-serif;font-weight:bold;letter-spacing:-0.15px">Number of Polls: 327420</div>
<div class="t" style="left:994px;top:542px;font-size:14px;line-height:20px;color:#000;font-family:'Liberation Sans',sans-serif;font-weight:bold;letter-spacing:-0.04px">Valid Slave Responses: 327420</div>
<div class="a" style="left:1098px;top:568px;width:80px;height:24px;background:#ececec;border-top:1px solid #fff;border-left:1px solid #fff;border-right:2px solid #6a6a6a;border-bottom:2px solid #6a6a6a;box-shadow:inset 0 0 0 0.5px #d0d0d0"></div>
<div class="t" style="left:1105px;top:569.5px;font-size:14px;line-height:20px;color:#000;font-family:'Liberation Sans',sans-serif;font-weight:bold;letter-spacing:-0.5px">Reset Ctrs</div>
<div style="position:absolute;white-space:pre;font-family:'Liberation Serif',serif;font-size:13.8px;line-height:13px;color:#000;transform:scaleX(0.87);transform-origin:0 0;-webkit-text-stroke:0.12px #000;left:620.5px;top:726px;letter-spacing:2.295px">40001
40002
40003
40004
40005
40006
40007
40008
40009
40010
40011
40012
40013</div>
<div style="position:absolute;white-space:pre;font-family:'Liberation Serif',serif;font-size:13.8px;line-height:13px;color:#000;transform:scaleX(0.87);transform-origin:0 0;-webkit-text-stroke:0.12px #000;left:660.5px;top:726px;width:9.195px;text-align:center">:
:
:
:
:
:
:
:
:
:
:
:
:</div>
<div style="position:absolute;white-space:pre;font-family:'Liberation Serif',serif;font-size:13.8px;line-height:13px;color:#000;transform:scaleX(0.87);transform-origin:0 0;-webkit-text-stroke:0.12px #000;left:677.0px;top:726px;font-size:12px">&lt;
&lt;
&lt;
&lt;
&lt;
&lt;
&lt;
&lt;
&lt;
&lt;
&lt;
&lt;
&lt;</div>
<div style="position:absolute;white-space:pre;font-family:'Liberation Serif',serif;font-size:13.8px;line-height:13px;color:#000;transform:scaleX(0.87);transform-origin:0 0;-webkit-text-stroke:0.12px #000;left:676.5px;top:726px;width:55.17px;text-align:right;letter-spacing:2.295px">20
110
0
1
1
7
0
7
0
0
0
0
0</div>
<div style="position:absolute;white-space:pre;font-family:'Liberation Serif',serif;font-size:13.8px;line-height:13px;color:#000;transform:scaleX(0.87);transform-origin:0 0;-webkit-text-stroke:0.12px #000;left:725.0px;top:726px;font-size:12px">&gt;
&gt;
&gt;
&gt;
&gt;
&gt;
&gt;
&gt;
&gt;
&gt;
&gt;
&gt;
&gt;</div>
<div style="position:absolute;white-space:pre;font-family:'Liberation Serif',serif;font-size:13.8px;line-height:13px;color:#000;transform:scaleX(0.87);transform-origin:0 0;-webkit-text-stroke:0.12px #000;left:748.5px;top:726px;letter-spacing:2.295px">40014
40015
40016
40017
40018
40019
40020
40021
40022
40023
40024
40025
40026</div>
<div style="position:absolute;white-space:pre;font-family:'Liberation Serif',serif;font-size:13.8px;line-height:13px;color:#000;transform:scaleX(0.87);transform-origin:0 0;-webkit-text-stroke:0.12px #000;left:788.5px;top:726px;width:9.195px;text-align:center">:
:
:
:
:
:
:
:
:
:
:
:
:</div>
<div style="position:absolute;white-space:pre;font-family:'Liberation Serif',serif;font-size:13.8px;line-height:13px;color:#000;transform:scaleX(0.87);transform-origin:0 0;-webkit-text-stroke:0.12px #000;left:805.0px;top:726px;font-size:12px">&lt;
&lt;
&lt;
&lt;
&lt;
&lt;
&lt;
&lt;
&lt;
&lt;
&lt;
&lt;
&lt;</div>
<div style="position:absolute;white-space:pre;font-family:'Liberation Serif',serif;font-size:13.8px;line-height:13px;color:#000;transform:scaleX(0.87);transform-origin:0 0;-webkit-text-stroke:0.12px #000;left:804.5px;top:726px;width:55.17px;text-align:right;letter-spacing:2.295px">0
0
0
0
0
0
0
0
0
0
0
0
0</div>
<div style="position:absolute;white-space:pre;font-family:'Liberation Serif',serif;font-size:13.8px;line-height:13px;color:#000;transform:scaleX(0.87);transform-origin:0 0;-webkit-text-stroke:0.12px #000;left:853.0px;top:726px;font-size:12px">&gt;
&gt;
&gt;
&gt;
&gt;
&gt;
&gt;
&gt;
&gt;
&gt;
&gt;
&gt;
&gt;</div>
<div style="position:absolute;white-space:pre;font-family:'Liberation Serif',serif;font-size:13.8px;line-height:13px;color:#000;transform:scaleX(0.87);transform-origin:0 0;-webkit-text-stroke:0.12px #000;left:876.5px;top:726px;letter-spacing:2.295px">40027
40028
40029
40030
40031
40032
40033
40034
40035
40036
40037
40038
40039</div>
<div style="position:absolute;white-space:pre;font-family:'Liberation Serif',serif;font-size:13.8px;line-height:13px;color:#000;transform:scaleX(0.87);transform-origin:0 0;-webkit-text-stroke:0.12px #000;left:916.5px;top:726px;width:9.195px;text-align:center">:
:
:
:
:
:
:
:
:
:
:
:
:</div>
<div style="position:absolute;white-space:pre;font-family:'Liberation Serif',serif;font-size:13.8px;line-height:13px;color:#000;transform:scaleX(0.87);transform-origin:0 0;-webkit-text-stroke:0.12px #000;left:933.0px;top:726px;font-size:12px">&lt;
&lt;
&lt;
&lt;
&lt;
&lt;
&lt;
&lt;
&lt;
&lt;
&lt;
&lt;
&lt;</div>
<div style="position:absolute;white-space:pre;font-family:'Liberation Serif',serif;font-size:13.8px;line-height:13px;color:#000;transform:scaleX(0.87);transform-origin:0 0;-webkit-text-stroke:0.12px #000;left:932.5px;top:726px;width:55.17px;text-align:right;letter-spacing:2.295px">0
0
0
0
0
0
0
0
0
0
0
0
0</div>
<div style="position:absolute;white-space:pre;font-family:'Liberation Serif',serif;font-size:13.8px;line-height:13px;color:#000;transform:scaleX(0.87);transform-origin:0 0;-webkit-text-stroke:0.12px #000;left:981.0px;top:726px;font-size:12px">&gt;
&gt;
&gt;
&gt;
&gt;
&gt;
&gt;
&gt;
&gt;
&gt;
&gt;
&gt;
&gt;</div>
<div style="position:absolute;white-space:pre;font-family:'Liberation Serif',serif;font-size:13.8px;line-height:13px;color:#000;transform:scaleX(0.87);transform-origin:0 0;-webkit-text-stroke:0.12px #000;left:1004.5px;top:726px;letter-spacing:2.295px">40040
40041
40042
40043
40044
40045
40046
40047
40048
40049
40050
40051
40052</div>
<div style="position:absolute;white-space:pre;font-family:'Liberation Serif',serif;font-size:13.8px;line-height:13px;color:#000;transform:scaleX(0.87);transform-origin:0 0;-webkit-text-stroke:0.12px #000;left:1044.5px;top:726px;width:9.195px;text-align:center">:
:
:
:
:
:
:
:
:
:
:
:
:</div>
<div style="position:absolute;white-space:pre;font-family:'Liberation Serif',serif;font-size:13.8px;line-height:13px;color:#000;transform:scaleX(0.87);transform-origin:0 0;-webkit-text-stroke:0.12px #000;left:1061.0px;top:726px;font-size:12px">&lt;
&lt;
&lt;
&lt;
&lt;
&lt;
&lt;
&lt;
&lt;
&lt;
&lt;
&lt;
&lt;</div>
<div style="position:absolute;white-space:pre;font-family:'Liberation Serif',serif;font-size:13.8px;line-height:13px;color:#000;transform:scaleX(0.87);transform-origin:0 0;-webkit-text-stroke:0.12px #000;left:1060.5px;top:726px;width:55.17px;text-align:right;letter-spacing:2.295px">0
0
0
0
0
0
0
0
0
0
0
0
0</div>
<div style="position:absolute;white-space:pre;font-family:'Liberation Serif',serif;font-size:13.8px;line-height:13px;color:#000;transform:scaleX(0.87);transform-origin:0 0;-webkit-text-stroke:0.12px #000;left:1109.0px;top:726px;font-size:12px">&gt;
&gt;
&gt;
&gt;
&gt;
&gt;
&gt;
&gt;
&gt;
&gt;
&gt;
&gt;
&gt;</div>
<div style="position:absolute;white-space:pre;font-family:'Liberation Serif',serif;font-size:13.8px;line-height:13px;color:#000;transform:scaleX(0.87);transform-origin:0 0;-webkit-text-stroke:0.12px #000;left:1132.5px;top:726px;letter-spacing:2.295px">40053
40054
40055
40056
40057
40058
40059
40060
40061
40062
40063
40064
40065</div>
<div style="position:absolute;white-space:pre;font-family:'Liberation Serif',serif;font-size:13.8px;line-height:13px;color:#000;transform:scaleX(0.87);transform-origin:0 0;-webkit-text-stroke:0.12px #000;left:1172.5px;top:726px;width:9.195px;text-align:center">:
:
:
:
:
:
:
:
:
:
:
:
:</div>
<div style="position:absolute;white-space:pre;font-family:'Liberation Serif',serif;font-size:13.8px;line-height:13px;color:#000;transform:scaleX(0.87);transform-origin:0 0;-webkit-text-stroke:0.12px #000;left:1189.0px;top:726px;font-size:12px">&lt;
&lt;
&lt;
&lt;
&lt;
&lt;
&lt;
&lt;
&lt;
&lt;
&lt;
&lt;
&lt;</div>
<div style="position:absolute;white-space:pre;font-family:'Liberation Serif',serif;font-size:13.8px;line-height:13px;color:#000;transform:scaleX(0.87);transform-origin:0 0;-webkit-text-stroke:0.12px #000;left:1188.5px;top:726px;width:55.17px;text-align:right;letter-spacing:2.295px">0
0
0
0
0
0
0
0
0
0
0
0
0</div>
<div style="position:absolute;white-space:pre;font-family:'Liberation Serif',serif;font-size:13.8px;line-height:13px;color:#000;transform:scaleX(0.87);transform-origin:0 0;-webkit-text-stroke:0.12px #000;left:1237.0px;top:726px;font-size:12px">&gt;
&gt;
&gt;
&gt;
&gt;
&gt;
&gt;
&gt;
&gt;
&gt;
&gt;
&gt;
&gt;</div>
<div style="position:absolute;white-space:pre;font-family:'Liberation Serif',serif;font-size:13.8px;line-height:13px;color:#000;transform:scaleX(0.87);transform-origin:0 0;-webkit-text-stroke:0.12px #000;left:1260.5px;top:726px;letter-spacing:2.295px">40066
40067
40068
40069
40070
40071
40072
40073
40074
40075
40076
40077
40078</div>
<div style="position:absolute;white-space:pre;font-family:'Liberation Serif',serif;font-size:13.8px;line-height:13px;color:#000;transform:scaleX(0.87);transform-origin:0 0;-webkit-text-stroke:0.12px #000;left:1300.5px;top:726px;width:9.195px;text-align:center">:
:
:
:
:
:
:
:
:
:
:
:
:</div>
<div style="position:absolute;white-space:pre;font-family:'Liberation Serif',serif;font-size:13.8px;line-height:13px;color:#000;transform:scaleX(0.87);transform-origin:0 0;-webkit-text-stroke:0.12px #000;left:1317.0px;top:726px;font-size:12px">&lt;
&lt;
&lt;
&lt;
&lt;
&lt;
&lt;
&lt;
&lt;
&lt;
&lt;
&lt;
&lt;</div>
<div style="position:absolute;white-space:pre;font-family:'Liberation Serif',serif;font-size:13.8px;line-height:13px;color:#000;transform:scaleX(0.87);transform-origin:0 0;-webkit-text-stroke:0.12px #000;left:1316.5px;top:726px;width:55.17px;text-align:right;letter-spacing:2.295px">0
0
0
0
0
0
0
0
0
0
0
0
0</div>
<div style="position:absolute;white-space:pre;font-family:'Liberation Serif',serif;font-size:13.8px;line-height:13px;color:#000;transform:scaleX(0.87);transform-origin:0 0;-webkit-text-stroke:0.12px #000;left:1365.0px;top:726px;font-size:12px">&gt;
&gt;
&gt;
&gt;
&gt;
&gt;
&gt;
&gt;
&gt;
&gt;
&gt;
&gt;
&gt;</div>
<div style="position:absolute;white-space:pre;font-family:'Liberation Serif',serif;font-size:13.8px;line-height:13px;color:#000;transform:scaleX(0.87);transform-origin:0 0;-webkit-text-stroke:0.12px #000;left:1388.5px;top:726px;letter-spacing:2.295px">40079
40080
40081
40082
40083
40084
40085
40086
40087
40088
40089
40090
40091</div>
<div style="position:absolute;white-space:pre;font-family:'Liberation Serif',serif;font-size:13.8px;line-height:13px;color:#000;transform:scaleX(0.87);transform-origin:0 0;-webkit-text-stroke:0.12px #000;left:1428.5px;top:726px;width:9.195px;text-align:center">:
:
:
:
:
:
:
:
:
:
:
:
:</div>
<div style="position:absolute;white-space:pre;font-family:'Liberation Serif',serif;font-size:13.8px;line-height:13px;color:#000;transform:scaleX(0.87);transform-origin:0 0;-webkit-text-stroke:0.12px #000;left:1445.0px;top:726px;font-size:12px">&lt;
&lt;
&lt;
&lt;
&lt;
&lt;
&lt;
&lt;
&lt;
&lt;
&lt;
&lt;
&lt;</div>
<div style="position:absolute;white-space:pre;font-family:'Liberation Serif',serif;font-size:13.8px;line-height:13px;color:#000;transform:scaleX(0.87);transform-origin:0 0;-webkit-text-stroke:0.12px #000;left:1444.5px;top:726px;width:55.17px;text-align:right;letter-spacing:2.295px">0
0
0
0
0
0
0
0
0
0
0
0
0</div>
<div style="position:absolute;white-space:pre;font-family:'Liberation Serif',serif;font-size:13.8px;line-height:13px;color:#000;transform:scaleX(0.87);transform-origin:0 0;-webkit-text-stroke:0.12px #000;left:1493.0px;top:726px;font-size:12px">&gt;
&gt;
&gt;
&gt;
&gt;
&gt;
&gt;
&gt;
&gt;
&gt;
&gt;
&gt;
&gt;</div>
<div style="position:absolute;white-space:pre;font-family:'Liberation Serif',serif;font-size:13.8px;line-height:13px;color:#000;transform:scaleX(0.87);transform-origin:0 0;-webkit-text-stroke:0.12px #000;left:1516.5px;top:726px;letter-spacing:2.295px">40092
40093
40094
40095
40096
40097
40098
40099
40100</div>
<div style="position:absolute;white-space:pre;font-family:'Liberation Serif',serif;font-size:13.8px;line-height:13px;color:#000;transform:scaleX(0.87);transform-origin:0 0;-webkit-text-stroke:0.12px #000;left:1556.5px;top:726px;width:9.195px;text-align:center">:
:
:
:
:
:
:
:
:</div>
<div style="position:absolute;white-space:pre;font-family:'Liberation Serif',serif;font-size:13.8px;line-height:13px;color:#000;transform:scaleX(0.87);transform-origin:0 0;-webkit-text-stroke:0.12px #000;left:1573.0px;top:726px;font-size:12px">&lt;
&lt;
&lt;
&lt;
&lt;
&lt;
&lt;
&lt;
&lt;</div>
<div style="position:absolute;white-space:pre;font-family:'Liberation Serif',serif;font-size:13.8px;line-height:13px;color:#000;transform:scaleX(0.87);transform-origin:0 0;-webkit-text-stroke:0.12px #000;left:1572.5px;top:726px;width:55.17px;text-align:right;letter-spacing:2.295px">0
0
0
0
0
0
0
0
0</div>
<div style="position:absolute;white-space:pre;font-family:'Liberation Serif',serif;font-size:13.8px;line-height:13px;color:#000;transform:scaleX(0.87);transform-origin:0 0;-webkit-text-stroke:0.12px #000;left:1621.0px;top:726px;font-size:12px">&gt;
&gt;
&gt;
&gt;
&gt;
&gt;
&gt;
&gt;
&gt;</div>
<div class="a" style="left:688px;top:714px;width:55px;height:42px;border:3px solid #f5211b;border-radius:4px"></div>
</body></html>
